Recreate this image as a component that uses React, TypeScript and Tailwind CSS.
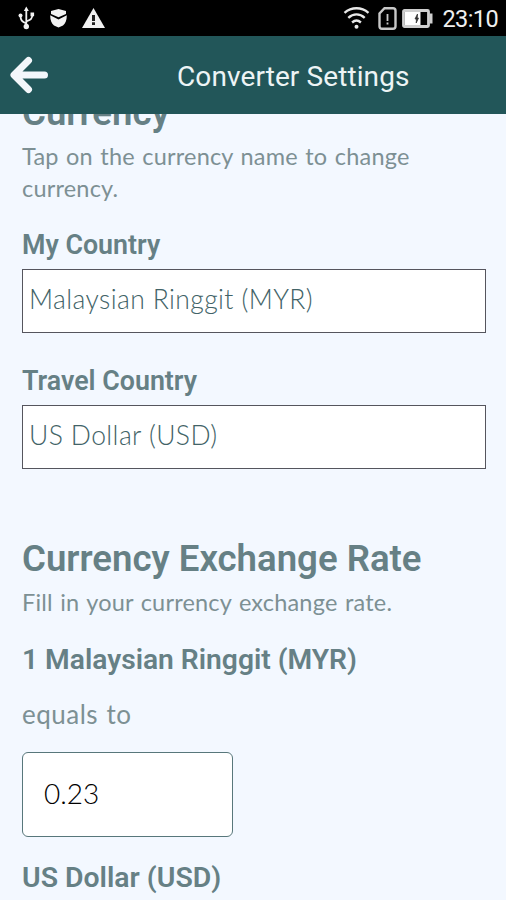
import React, { useState } from 'react';

const StatusBar: React.FC = () => (
  <div className="flex h-9 shrink-0 items-center justify-between bg-black pl-[18px] pr-2 text-white">
    <div className="flex items-center gap-3.5">
      {/* USB */}
      <svg width="17" height="24" viewBox="0 0 17 24" fill="none" stroke="#f2f2f2" strokeWidth="1.8">
        <path d="M8.3 3v17M8.3 17.5C4 15.5 2.5 14.5 2.5 10M8.3 15.5c4.5-2 6-2.5 6-7" />
        <path d="M8.3 .5l2.5 4.500H5.8z" fill="#f2f2f2" stroke="none" />
        <circle cx="8.3" cy="20.5" r="2.7" fill="#f2f2f2" stroke="none" />
        <circle cx="2.5" cy="9.5" r="2" fill="#f2f2f2" stroke="none" />
        <path d="M12.5 6.500h3.600v3.800h-3.600z" fill="#f2f2f2" stroke="none" />
      </svg>
      {/* Shield */}
      <svg width="19" height="20" viewBox="0 0 19 20" fill="#f2f2f2">
        <path d="M2 3L9.500 1 17 3v3L9.500 9.200 2 6z" />
        <path d="M1.200 7.300l8.300 4.200 8.300-4.200c0 5-1.300 8-3.800 10.200L9.500 19.500 5 17.500C2.500 15.300 1.200 12.300 1.200 7.300z" />
      </svg>
      <svg width="23" height="20" viewBox="0 0 23 20">
        <path d="M11.500 0L23 20H0z" fill="#f2f2f2" />
        <path d="M10 7h3v6h-3zM10 14.300h3v2.700h-3z" fill="#222" />
      </svg>
    </div>
    <div className="flex items-center">
      <svg width="27" height="24" viewBox="0 0 27 24" fill="none" stroke="#e8e8e8" strokeWidth="2.4" className="mr-2">
        <path d="M1.500 6.800c7-6 17-6 24 0M5.300 11.800c5-4.600 11.400-4.600 16.400 0M9.100 16.500c2.800-2.400 6-2.400 8.800 0" />
        <circle cx="13.5" cy="20.8" r="2" fill="#e8e8e8" stroke="none" />
      </svg>
      <svg width="19" height="23" viewBox="0 0 19 23" fill="none" stroke="#c8c8c8" strokeWidth="2.4" className="mr-[5px]">
        <path d="M6.500 1.200H15a2.500 2.500 0 0 1 2.500 2.500v15.600a2.500 2.500 0 0 1-2.500 2.500H4a2.500 2.500 0 0 1-2.500-2.500V6.500z" />
        <path d="M9.500 7v7M9.500 15.500v2" strokeWidth="1.8" />
      </svg>
      <svg width="31" height="19" viewBox="0 0 31 19" className="mr-[9px]">
        <rect x="1.5" y="1.5" width="25" height="16" rx="1" fill="none" stroke="#cfcfcf" strokeWidth="2.8" />
        <path d="M27.500 4.500h3v10h-3z" fill="#cfcfcf" />
        <path d="M3 3h15.500v13H3z" fill="#fff" />
        <path d="M15.500 5l-2.500 5h1.500l-.3 4 2.300-5h-1.300z" fill="#333" stroke="#333" strokeWidth=".8" />
      </svg>
      <span className="pt-0.5 text-[23.5px] leading-[34px] tracking-[-0.6px] text-[#efefef]">23:10</span>
    </div>
  </div>
);

const Header: React.FC = () => (
  <header className="z-10 flex h-[77.5px] shrink-0 items-center bg-[#225659] pl-2.5 text-[#edf4f5]">
    <svg width="40" height="40" viewBox="0 0 40 40" fill="none" stroke="#f3f7fb" strokeWidth="7" strokeLinecap="round" strokeLinejoin="round">
      <path d="M18.500 5.500L4 20l14.500 14.500M5 20h29.500" />
    </svg>
    <h1 className="ml-[127px] pt-1 text-[28px] leading-9 tracking-[0.1px]">Converter Settings</h1>
  </header>
);

interface CurrencyFieldProps {
  label: string;
  value: string;
}

const CurrencyField: React.FC<CurrencyFieldProps> = ({ label, value }) => (
  <div>
    <h3 className="text-[26.8px] font-semibold leading-8">{label}</h3>
    <button className="mt-2 flex h-16 w-full items-center border border-[#55555d] bg-white pb-[3px] pl-1.5 text-left font-['Lato'] text-[26.5px] font-light leading-8 tracking-[0.4px] text-[#426367]">
      {value}
    </button>
  </div>
);

const App: React.FC = () => {
  const [rate, setRate] = useState('0.23');

  return (
    <div className="flex h-[900px] w-full flex-col overflow-hidden bg-[#f3f8ff] font-['Roboto',sans-serif]">
      <StatusBar />
      <Header />

      <main className="-mt-[21px] flex flex-col pl-[22px] pr-5 text-[#668085]">
        <h2 className="text-[36.6px] font-semibold leading-10">Currency</h2>
        <p className="mt-[7px] font-['Lato'] text-[23.5px] leading-8 tracking-[0.2px] text-[#7d9094] [word-spacing:1.2px]">
          Tap on the currency name to change currency.
        </p>

        <div className="mt-[25px] flex flex-col gap-8">
          <CurrencyField label="My Country" value="Malaysian Ringgit (MYR)" />
          <CurrencyField label="Travel Country" value="US Dollar (USD)" />
        </div>

        <h2 className="mt-[70px] text-[36.6px] font-semibold leading-10">Currency Exchange Rate</h2>
        <p className="mt-[7px] font-['Lato'] text-[23.5px] leading-8 tracking-[0.2px] text-[#7d9094] [word-spacing:1.2px]">
          Fill in your currency exchange rate.
        </p>

        <h3 className="mt-[26px] text-[28.2px] font-semibold leading-8">1 Malaysian Ringgit (MYR)</h3>
        <p className="mt-[22px] font-['Lato'] text-[26px] leading-8 tracking-[0.5px] text-[#7d9094] [word-spacing:1.2px]">equals to</p>
        <input
          value={rate}
          onChange={(e) => setRate(e.target.value)}
          className="mt-[22px] h-[85px] w-[210.5px] rounded-md border border-[#58777b] bg-white pb-0.5 pl-[21px] font-['Lato'] text-[28px] font-light text-black outline-none"
        />
        <h3 className="mt-[25px] text-[28.4px] font-semibold leading-8">US Dollar (USD)</h3>
      </main>
    </div>
  );
};

export default App;
